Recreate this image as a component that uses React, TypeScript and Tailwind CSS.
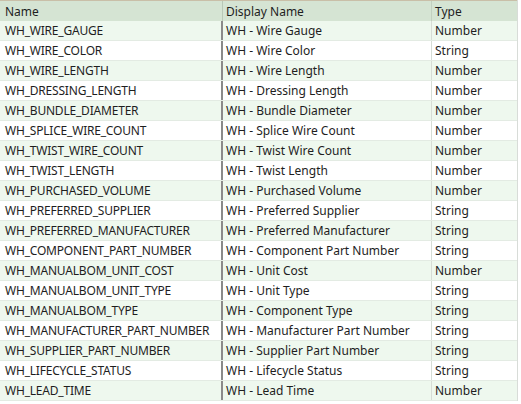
const rows: [string, string, string][] = [
  ['WH_WIRE_GAUGE', 'WH - Wire Gauge', 'Number'],
  ['WH_WIRE_COLOR', 'WH - Wire Color', 'String'],
  ['WH_WIRE_LENGTH', 'WH - Wire Length', 'Number'],
  ['WH_DRESSING_LENGTH', 'WH - Dressing Length', 'Number'],
  ['WH_BUNDLE_DIAMETER', 'WH - Bundle Diameter', 'Number'],
  ['WH_SPLICE_WIRE_COUNT', 'WH - Splice Wire Count', 'Number'],
  ['WH_TWIST_WIRE_COUNT', 'WH - Twist Wire Count', 'Number'],
  ['WH_TWIST_LENGTH', 'WH - Twist Length', 'Number'],
  ['WH_PURCHASED_VOLUME', 'WH - Purchased Volume', 'Number'],
  ['WH_PREFERRED_SUPPLIER', 'WH - Preferred Supplier', 'String'],
  ['WH_PREFERRED_MANUFACTURER', 'WH - Preferred Manufacturer', 'String'],
  ['WH_COMPONENT_PART_NUMBER', 'WH - Component Part Number', 'String'],
  ['WH_MANUALBOM_UNIT_COST', 'WH - Unit Cost', 'Number'],
  ['WH_MANUALBOM_UNIT_TYPE', 'WH - Unit Type', 'String'],
  ['WH_MANUALBOM_TYPE', 'WH - Component Type', 'String'],
  ['WH_MANUFACTURER_PART_NUMBER', 'WH - Manufacturer Part Number', 'String'],
  ['WH_SUPPLIER_PART_NUMBER', 'WH - Supplier Part Number', 'String'],
  ['WH_LIFECYCLE_STATUS', 'WH - Lifecycle Status', 'String'],
  ['WH_LEAD_TIME', 'WH - Lead Time', 'Number'],
]

const App = () => {
  return (
    <div className="w-[521px] h-[404px] overflow-hidden bg-white font-['Noto_Sans',sans-serif] text-[12px] text-[#1e1e1e]">
      <div className="w-[518px] border-r border-[#d8dcd8]">
        {/* header */}
        <div className="flex h-[21px] items-center bg-[#d5e4d3] border-t border-[#c9bfa8]">
          <div className="w-[223px] h-full pl-[5px] pt-[1px] flex items-center border-r border-[#b9c8b7]">Name</div>
          <div className="w-[209px] h-full pl-[3px] pt-[1px] flex items-center border-r border-[#c2d0c0]">Display Name</div>
          <div className="flex-1 pl-[3px] pt-[1px]">Type</div>
        </div>

        {rows.map(([name, display, type], i) => (
          <div
            key={name}
            className={`flex h-[20px] items-center border-b border-[#e3ebe3] ${i % 2 === 0 ? 'bg-[#eef8ee]' : 'bg-white'}`}
          >
            <div className="w-[223px] h-full pl-[5px] pt-[1px] flex items-center border-r-2 border-[#8a8a8a] whitespace-nowrap tracking-[-0.2px]">{name}</div>
            <div className="w-[209px] h-full pl-[3px] pt-[1px] flex items-center border-r border-[#d6ddd6] whitespace-nowrap">{display}</div>
            <div className="flex-1 pl-[3px] pt-[1px]">{type}</div>
          </div>
        ))}
      </div>
    </div>
  )
}

export default App
